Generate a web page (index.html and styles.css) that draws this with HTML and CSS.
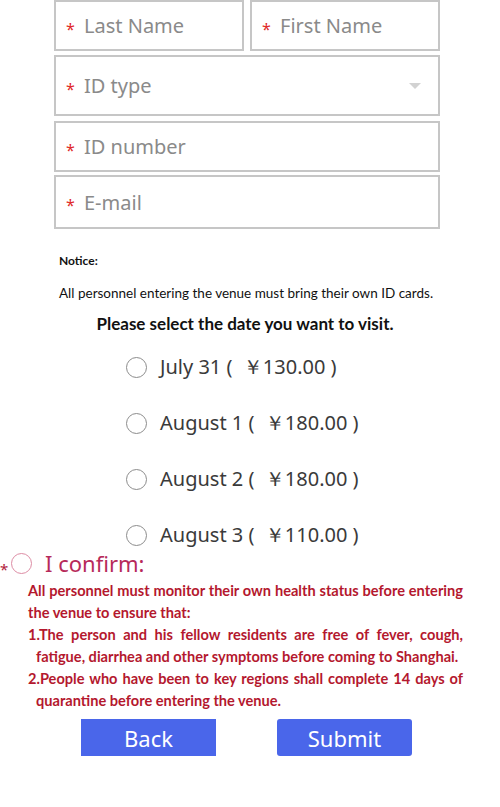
FILE: index.html
```html
<!DOCTYPE html>
<html>
<head>
    <title>Registration</title>
    <link rel="stylesheet" href="styles.css">
</head>
<body>
    <!-- Visitor details -->
    <div class="fields">
        <div class="field-row">
            <div class="field half"><span class="req">*</span><span class="ph">Last Name</span></div>
            <div class="field half"><span class="req">*</span><span class="ph">First Name</span></div>
        </div>
        <div class="field select"><span class="req">*</span><span class="ph">ID type</span><span class="caret"></span></div>
        <div class="field number"><span class="req">*</span><span class="ph">ID number</span></div>
        <div class="field email"><span class="req">*</span><span class="ph">E-mail</span></div>
    </div>

    <div class="notice">
        <div class="notice-title">Notice:</div>
        <div class="notice-text">All personnel entering the venue must bring their own ID cards.</div>
    </div>

    <h3 class="date-title">Please select the date you want to visit.</h3>

    <div class="dates">
        <label class="date"><span class="radio"></span>July 31&nbsp;(&nbsp; ￥130.00&nbsp;)</label>
        <label class="date"><span class="radio"></span>August 1&nbsp;(&nbsp; ￥180.00&nbsp;)</label>
        <label class="date"><span class="radio"></span>August 2&nbsp;(&nbsp; ￥180.00&nbsp;)</label>
        <label class="date"><span class="radio"></span>August 3&nbsp;(&nbsp; ￥110.00&nbsp;)</label>
    </div>

    <!-- Health declaration -->
    <div class="confirm">
        <span class="confirm-req">*</span><span class="radio pink"></span><span class="confirm-label">I confirm:</span>
    </div>
    <div class="declare">
        <p>All personnel must monitor their own health status before entering the venue to ensure that:</p>
        <p class="item">1.The person and his fellow residents are free of fever, cough, fatigue, diarrhea and other symptoms before coming to Shanghai.</p>
        <p class="item">2.People who have been to key regions shall complete 14 days of quarantine before entering the venue.</p>
    </div>

    <div class="buttons">
        <button class="btn">Back</button>
        <button class="btn round">Submit</button>
    </div>
</body>
</html>
```

FILE: styles.css
```css
body {
    margin: 0;
    width: 500px;
    font-family: "Noto Sans", "Open Sans", sans-serif;
    background: #fff;
}
.fields {
    width: 386px;
    margin-left: 54px;
}
.field-row {
    display: flex;
    gap: 6px;
    margin-bottom: 4px;
}
.field {
    box-sizing: border-box;
    border: 2px solid #c6c6c6;
    display: flex;
    align-items: center;
    padding-left: 10px;
    height: 51px;
    position: relative;
}
.field.half {
    flex: 1;
    height: 51px;
}
.field.select {
    height: 61px;
    margin-bottom: 5px;
}
.field.number {
    height: 51px;
    margin-bottom: 3px;
}
.field.email {
    height: 54px;
}
.req {
    color: #e02a2a;
    font-size: 16px;
    width: 18px;
    padding-top: 6px;
}
.ph {
    color: #8a8a8a;
    font-size: 20px;
}
.caret {
    position: absolute;
    right: 17px;
    top: 26px;
    border-left: 6px solid transparent;
    border-right: 6px solid transparent;
    border-top: 6px solid #d2d2d2;
}
.notice {
    margin: 24px 0 0 59px;
    font-family: Lato, sans-serif;
    color: #111;
}
.notice-title {
    font-size: 12px;
    font-weight: bold;
}
.notice-text {
    margin-top: 17px;
    font-size: 13.5px;
}
.date-title {
    margin: 12px 0 0;
    text-align: center;
    font-family: Lato, sans-serif;
    font-size: 17px;
    font-weight: bold;
    color: #111;
    padding-right: 10px;
}
.dates {
    margin: 5px 0 0 126px;
}
.date {
    display: flex;
    align-items: center;
    height: 56px;
    color: #3a3a3a;
    font-size: 20px;
}
.radio {
    box-sizing: border-box;
    width: 21px;
    height: 21px;
    border: 1.5px solid #8c8c8c;
    border-radius: 50%;
    margin-right: 13px;
    flex: none;
}
.confirm {
    display: flex;
    align-items: center;
    margin-top: -14px;
    height: 28px;
}
.confirm-req {
    color: #b0203a;
    font-size: 15px;
    padding-top: 12px;
    width: 11px;
}
.radio.pink {
    border-color: #dd8ca4;
    margin-right: 13px;
}
.confirm-label {
    color: #b72a5a;
    font-size: 22px;
}
.declare {
    width: 435px;
    margin: 3px 0 0 28px;
    font-family: Lato, sans-serif;
    font-size: 14.6px;
    font-weight: bold;
    line-height: 22px;
    color: #b4182e;
    text-align: justify;
}
.declare p {
    margin: 0;
}
.declare .item {
    padding-left: 8px;
    text-indent: -8px;
}
.buttons {
    display: flex;
    gap: 61px;
    margin: 7px 0 0 81px;
}
.btn {
    width: 135px;
    height: 37px;
    border: none;
    background: #4a66ea;
    color: #fff;
    font-family: "Noto Sans", sans-serif;
    font-size: 22px;
    padding: 0;
}
.btn.round {
    border-radius: 3px;
}
```
